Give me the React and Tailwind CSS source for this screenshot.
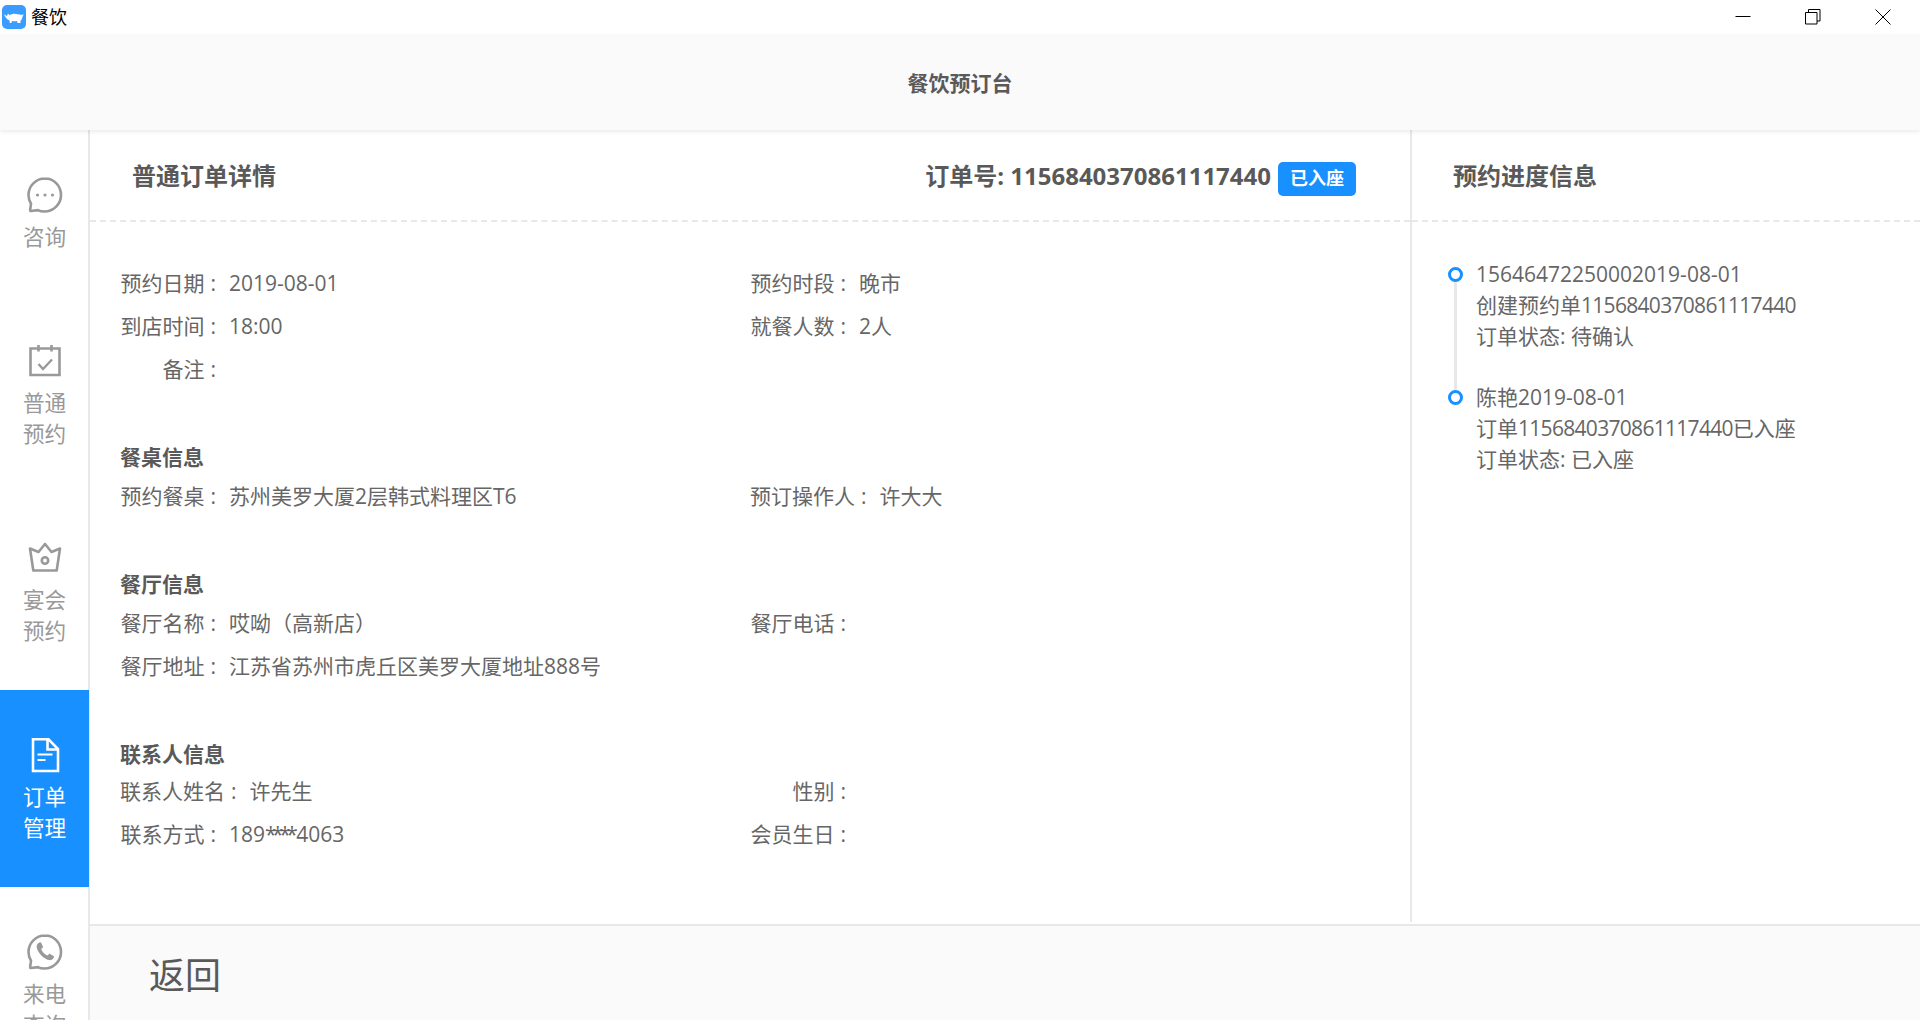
import { useState } from "react";

const fontStack = "font-['Open_Sans','Noto_Sans_CJK_SC',sans-serif]";

function ChatIcon() {
  return (
    <svg width="36" height="36" viewBox="0 0 36 36" fill="none" stroke="currentColor" strokeWidth="2.6">
      <path d="M18 1.500C8.900 1.500 1.500 8.900 1.500 18c0 3.200.9 6.200 2.500 8.700l-.9 6.500c-.1.500.3.900.8.800l7-.8c2.100.9 4.300 1.300 6.600 1.300 9.100 0 16.500-7.400 16.500-16.500S27.100 1.500 18 1.500z" />
      <circle cx="10.500" cy="18" r="1.600" fill="currentColor" stroke="none" />
      <circle cx="18" cy="18" r="1.600" fill="currentColor" stroke="none" />
      <circle cx="25.500" cy="18" r="1.600" fill="currentColor" stroke="none" />
    </svg>
  );
}

function CalendarIcon() {
  return (
    <svg width="36" height="36" viewBox="0 0 36 36" fill="none" stroke="currentColor" strokeWidth="2.600">
      <path d="M3.500 5.500h29v26.500h-29z" />
      <path d="M11.500 2v6.500M24.500 2v6.500" />
      <path d="M11.500 21l4.500 5 9-9.500" strokeWidth="2.400" />
    </svg>
  );
}

function CrownIcon() {
  return (
    <svg width="36" height="36" viewBox="0 0 36 36" fill="none" stroke="currentColor" strokeWidth="2.600" strokeLinejoin="round">
      <path d="M18 4l-6.500 8L3 8.500l3.300 22h23.400L33 8.500 24.500 12z" />
      <circle cx="18" cy="20.500" r="3.200" />
    </svg>
  );
}

function DocIcon() {
  return (
    <svg width="36" height="36" viewBox="0 0 36 36" fill="none" stroke="currentColor" strokeWidth="2.600">
      <path d="M6 2.300h15.500L31 12v22H6z" />
      <path d="M20.500 2.300V12.500H31" />
      <path d="M10.500 17.500h15M10.500 23h8" strokeWidth="2.200" />
    </svg>
  );
}

function PhoneIcon() {
  return (
    <svg width="36" height="36" viewBox="0 0 36 36" fill="none" stroke="currentColor" strokeWidth="2.600">
      <path d="M18 1.500C8.900 1.500 1.500 8.900 1.500 18c0 3.200.9 6.200 2.500 8.700l-.9 6.500c-.1.500.3.900.8.800l7-.8c2.100.9 4.300 1.300 6.600 1.300 9.100 0 16.500-7.400 16.500-16.500S27.100 1.500 18 1.500z" />
      <path
        d="M12.500 8.500c-1.800.6-3.200 2.500-2.800 4.800.8 4.900 6.800 11.900 12.300 12.800 2.300.4 4.300-1 5-2.800.2-.6 0-1.100-.5-1.400l-3.300-1.900c-.5-.3-1-.2-1.400.2l-1.300 1.400c-2.800-1-5.400-3.800-6.300-6.500l1.400-1.300c.4-.4.500-.9.300-1.400l-1.700-3.700c-.3-.5-1-.8-1.700-.2z"
        fill="currentColor"
        stroke="none"
      />
    </svg>
  );
}

const navItems = [
  { id: "consult", lines: ["咨询"], icon: <ChatIcon />, h: "h-[166px]" },
  { id: "normal", lines: ["普通", "预约"], icon: <CalendarIcon />, h: "h-[197px]" },
  { id: "banquet", lines: ["宴会", "预约"], icon: <CrownIcon />, h: "h-[197px]" },
  { id: "orders", lines: ["订单", "管理"], icon: <DocIcon />, h: "h-[197px]" },
  { id: "calls", lines: ["来电", "查询"], icon: <PhoneIcon />, h: "h-[197px]" },
];

function NavItem({ item, active }) {
  return (
    <div
      className={`${item.h} w-[89px] shrink-0 flex flex-col items-center pt-[47px] ${
        active ? "bg-[#1890ff] text-white" : "text-[#999]"
      }`}
    >
      {item.icon}
      <div className="mt-[8px] text-[21.6px] leading-[31px] text-center">
        {item.lines.map((l) => (
          <div key={l}>{l}</div>
        ))}
      </div>
    </div>
  );
}

function Field({ label, value }) {
  return (
    <div className="flex items-center h-[43px] text-[21px] text-[#666]">
      <span className="min-w-[96px] flex justify-end">
        {label}
        <span className="ml-[6px]">:</span>
      </span>
      <span className="ml-[13px]">{value}</span>
    </div>
  );
}

function SectionTitle({ children, className = "mt-[49px]" }) {
  return (
    <h4 className={`${className} h-[35px] flex items-center text-[21px] font-bold text-[#595959]`}>
      {children}
    </h4>
  );
}

function FieldGrid({ children }) {
  return <div className="grid grid-cols-[630px_1fr]">{children}</div>;
}

function TimelineItem({ lines, last }) {
  return (
    <div className="relative pl-[28px] pb-[30px] text-[21px] leading-[31px] text-[#666]">
      {!last && <div className="absolute left-[6px] top-[16px] bottom-[-8px] w-[3px] bg-[#e8e8e8]" />}
      <div className="absolute left-0 top-[8px] w-[15px] h-[15px] rounded-full border-[3px] border-[#1890ff] bg-white" />
      {lines.map((l, i) => (
        <div key={i}>{l}</div>
      ))}
    </div>
  );
}

const OrderNo = () => <span className="tracking-[-0.7px]">1156840370861117440</span>;

export default function App() {
  const [active] = useState("orders");

  return (
    <div className={`h-screen flex flex-col overflow-hidden bg-white ${fontStack}`}>
      {/* 窗口标题栏 */}
      <div className="h-[34px] shrink-0 flex items-center justify-between">
        <div className="flex items-center pl-[2px]">
          <svg width="24" height="24" viewBox="0 0 24 24">
            <rect width="24" height="24" rx="5" fill="#3a9cff" />
            <path
              d="M2 9.500c1.200.3 2 1.200 3 1.500l1-2.500 1.500 1.800c2.500-1.500 5.500-2 8-1 2 .5 4 .5 6.500.2-.8.8-1.500 1.800-1.700 3-.2 1.500-.8 2.500-1.800 3.200v2.300h-3l-.5-2c-1.500.3-3.500.3-5 0l-.7 2H7.800l-.3-2.500c-2.500-1-4.500-3.500-5.500-6z"
              fill="#fff"
            />
          </svg>
          <span className="ml-[5px] text-[18px] text-black">餐饮</span>
        </div>
        <div className="flex items-center pr-[29px] gap-[54px] text-black">
          <svg width="16" height="16" viewBox="0 0 16 16" stroke="currentColor" fill="none">
            <path d="M0.500 7.500h15" />
          </svg>
          <svg width="16" height="16" viewBox="0 0 16 16" stroke="currentColor" fill="none">
            <path d="M0.500 3.500h11.500v11.500H0.500zM3.500 3.500V0.500h11.500v11.500h-3" />
          </svg>
          <svg width="16" height="16" viewBox="0 0 16 16" stroke="currentColor" fill="none">
            <path d="M0.500 0.500l15 15M15.500 0.500l-15 15" />
          </svg>
        </div>
      </div>

      <header className="relative z-10 h-[96px] shrink-0 pt-[4px] flex items-center justify-center bg-[#fafafa] shadow-[0_2px_4px_rgba(0,0,0,0.08)]">
        <h1 className="text-[21px] font-bold text-[#595959]">餐饮预订台</h1>
      </header>

      <div className="flex-1 min-h-0 flex">
        <aside className="w-[90px] shrink-0 border-r-2 border-[#e8e8e8]">
          {navItems.map((item) => (
            <NavItem key={item.id} item={item} active={item.id === active} />
          ))}
        </aside>

        <main className="flex-1 min-w-0 flex flex-col">
          <div className="h-[794px] shrink-0 flex">
            <section className="w-[1322px] h-[792px] shrink-0 border-r-2 border-[#e8e8e8]">
              <div className="h-[92px] pt-[2px] border-b-2 border-dashed border-[#e8e8e8] flex items-center justify-between pl-[42px] pr-[54px]">
                <h2 className="text-[24px] font-bold text-[#595959]">普通订单详情</h2>
                <div className="flex items-center">
                  <span className="text-[24px] font-bold text-[#595959]">订单号: 1156840370861117440</span>
                  <span className="ml-[7px] mt-[5px] w-[78px] h-[34px] rounded-[5px] bg-[#1890ff] text-white text-[18px] font-bold flex items-center justify-center">
                    已入座
                  </span>
                </div>
              </div>

              <div className="pl-[30px] pt-[40px]">
                <FieldGrid>
                  <Field label="预约日期" value="2019-08-01" />
                  <Field label="预约时段" value="晚市" />
                  <Field label="到店时间" value="18:00" />
                  <Field label="就餐人数" value="2人" />
                  <Field label="备注" value="" />
                </FieldGrid>

                <SectionTitle>餐桌信息</SectionTitle>
                <FieldGrid>
                  <Field label="预约餐桌" value="苏州美罗大厦2层韩式料理区T6" />
                  <Field label="预订操作人" value="许大大" />
                </FieldGrid>

                <SectionTitle>餐厅信息</SectionTitle>
                <FieldGrid>
                  <Field label="餐厅名称" value="哎呦（高新店）" />
                  <Field label="餐厅电话" value="" />
                  <Field label="餐厅地址" value="江苏省苏州市虎丘区美罗大厦地址888号" />
                </FieldGrid>

                <SectionTitle>联系人信息</SectionTitle>
                <div className="-mt-[2px]">
                  <FieldGrid>
                    <Field label="联系人姓名" value="许先生" />
                    <Field label="性别" value="" />
                    <Field
                      label="联系方式"
                      value={
                        <>
                          189<span className="tracking-[-4.5px] pr-[3px]">****</span>4063
                        </>
                      }
                    />
                    <Field label="会员生日" value="" />
                  </FieldGrid>
                </div>
              </div>
            </section>

            <section className="flex-1 min-w-0">
              <div className="h-[92px] pt-[2px] border-b-2 border-dashed border-[#e8e8e8] flex items-center pl-[41px]">
                <h2 className="text-[24px] font-bold text-[#595959]">预约进度信息</h2>
              </div>
              <div className="pl-[36px] pt-[37px]">
                <TimelineItem
                  lines={[
                    "15646472250002019-08-01",
                    <>
                      创建预约单
                      <OrderNo />
                    </>,
                    "订单状态: 待确认",
                  ]}
                />
                <TimelineItem
                  last
                  lines={[
                    "陈艳2019-08-01",
                    <>
                      订单
                      <OrderNo />
                      已入座
                    </>,
                    "订单状态: 已入座",
                  ]}
                />
              </div>
            </section>
          </div>

          <footer className="flex-1 border-t-2 border-[#e8e8e8] bg-[#fafafa] flex items-center pl-[59px] pt-[6px]">
            <span className="text-[36px] text-[#595959]">返回</span>
          </footer>
        </main>
      </div>
    </div>
  );
}
